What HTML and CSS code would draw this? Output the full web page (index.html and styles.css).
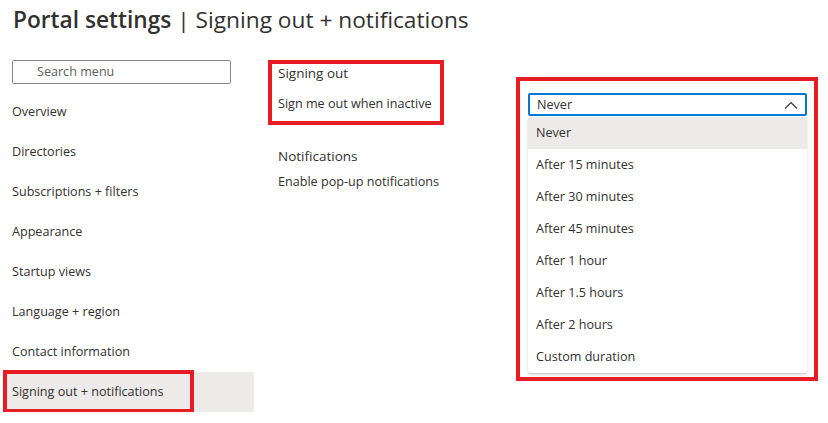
FILE: index.html
```html
<!DOCTYPE html>
<html>
<head>
<meta charset="utf-8">
<link rel="stylesheet" href="styles.css">
</head>
<body>
<h1 class="title"><span class="title-strong">Portal settings</span> | Signing out + notifications</h1>
<div class="main">
  <nav class="sidebar">
    <div class="search"><span class="search-ph">Search menu</span></div>
    <ul class="menu">
      <li class="menu-item">Overview</li>
      <li class="menu-item">Directories</li>
      <li class="menu-item">Subscriptions + filters</li>
      <li class="menu-item">Appearance</li>
      <li class="menu-item">Startup views</li>
      <li class="menu-item">Language + region</li>
      <li class="menu-item">Contact information</li>
      <li class="menu-item selected">Signing out + notifications<span class="mark mark-menu"></span></li>
    </ul>
  </nav>
  <section class="labels">
    <div class="group group-signout">
      <div class="group-title">Signing out</div>
      <div class="group-label">Sign me out when inactive</div>
      <span class="mark mark-signout"></span>
    </div>
    <div class="group group-notif">
      <div class="group-title">Notifications</div>
      <div class="group-label">Enable pop-up notifications</div>
    </div>
  </section>
  <section class="controls">
    <div class="dropdown-wrap">
      <span class="mark mark-dropdown"></span>
      <div class="dropdown">
        <span>Never</span>
        <svg class="chev" width="14" height="8" viewBox="0 0 14 8"><path d="M1 7.5 L7 1.5 L13 7.5" fill="none" stroke="#323130" stroke-width="1.1"/></svg>
      </div>
      <ul class="options">
        <li class="option active">Never</li>
        <li class="option">After 15 minutes</li>
        <li class="option">After 30 minutes</li>
        <li class="option">After 45 minutes</li>
        <li class="option">After 1 hour</li>
        <li class="option">After 1.5 hours</li>
        <li class="option">After 2 hours</li>
        <li class="option">Custom duration</li>
      </ul>
    </div>
  </section>
</div>
</body>
</html>
```

FILE: styles.css
```css
* { box-sizing: border-box; }
body {
  margin: 0;
  background: #fff;
  color: #323130;
  font-family: "Open Sans", "Noto Sans", sans-serif;
  font-size: 12.6px;
}
.title {
  margin: 0;
  padding: 5px 0 0 13px;
  height: 50px;
  font-size: 22.7px;
  font-weight: 400;
  line-height: 30px;
  color: #323130;
}
.title-strong { font-weight: 600; }
.main {
  display: flex;
  align-items: flex-start;
}
.sidebar {
  width: 250px;
  margin-left: 4px;
  padding-top: 10px;
}
.search {
  margin-left: 8px;
  width: 219px;
  height: 24px;
  border: 1px solid #8a8886;
  border-radius: 2px;
  padding-left: 24px;
  line-height: 22px;
}
.search-ph { color: #605e5c; }
.menu {
  list-style: none;
  margin: 8px 0 0;
  padding: 0;
}
.menu-item {
  position: relative;
  height: 40px;
  line-height: 40px;
  padding-left: 8px;
}
.menu-item.selected { background: #edebe9; }
.mark {
  position: absolute;
  border: 4px solid #e81c24;
  pointer-events: none;
}
.mark-menu { left: -1px; top: -2px; width: 191px; height: 43px; }
.labels {
  width: 250px;
  margin-left: 24px;
  padding-top: 10px;
}
.group { position: relative; }
.group-title { font-size: 13.5px; line-height: 20px; height: 26px; padding-top: 3px; }
.group-label { line-height: 20px; height: 26px; padding-top: 8px; }
.mark-signout { left: -10px; top: 0; width: 176px; height: 65px; }
.group-notif { margin-top: 31px; }
.group-notif .group-label { padding-top: 3px; height: 26px; }
.controls {
  padding-top: 43px;
}
.dropdown-wrap {
  position: relative;
  width: 279px;
}
.mark-dropdown { left: -12px; top: -16px; width: 302px; height: 304px; }
.dropdown {
  height: 23px;
  border: 2px solid #0078d4;
  border-radius: 2px;
  display: flex;
  align-items: center;
  justify-content: space-between;
  padding: 0 7px 0 7px;
  line-height: 19px;
}
.chev { display: block; }
.options {
  list-style: none;
  margin: 1px 0 0;
  padding: 0;
  background: #fff;
  box-shadow: 0 1.6px 3.6px rgba(0,0,0,0.13), 0 0.3px 0.9px rgba(0,0,0,0.11);
  border-radius: 2px;
}
.option {
  height: 32px;
  line-height: 32px;
  padding-left: 8px;
}
.option.active { background: #edebe9; }
```
